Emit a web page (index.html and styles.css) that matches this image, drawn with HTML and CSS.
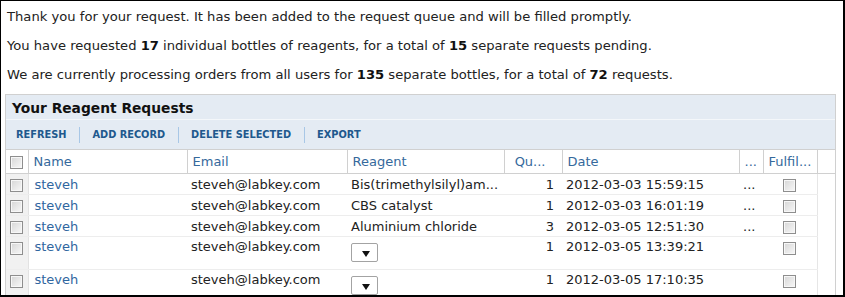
FILE: index.html
```html
<!DOCTYPE html>
<html lang="en">
<head>
    <meta charset="UTF-8">
    <title>Reagent Requests</title>
    <link rel="stylesheet" href="styles.css">
</head>
<body>
 <div class="frame">
  <p>Thank you for your request. It has been added to the request queue and will be filled promptly.</p>
  <p>You have requested <b>17</b> individual bottles of reagents, for a total of <b>15</b> separate requests pending.</p>
  <p>We are currently processing orders from all users for <b>135</b> separate bottles, for a total of <b>72</b> requests.</p>

  <div class="panel">
   <div class="panel-title">Your Reagent Requests</div>
   <div class="toolbar">
    <span class="tool">Refresh</span><span class="sep"></span>
    <span class="tool">Add Record</span><span class="sep"></span>
    <span class="tool">Delete Selected</span><span class="sep"></span>
    <span class="tool">Export</span>
   </div>
   <table class="grid">
    <colgroup>
     <col style="width:22px"><col style="width:159px"><col style="width:160px"><col style="width:157px">
     <col style="width:58px"><col style="width:177px"><col style="width:24px"><col style="width:54px"><col>
    </colgroup>
    <thead>
     <tr>
      <th class="cb-col"><span class="cb"></span></th>
      <th>Name</th>
      <th>Email</th>
      <th>Reagent</th>
      <th class="num">Qu...</th>
      <th>Date</th>
      <th>...</th>
      <th>Fulfil...</th>
      <th class="filler"></th>
     </tr>
    </thead>
    <tbody>
     <tr>
      <td class="cb-col"><span class="cb"></span></td>
      <td class="link">steveh</td>
      <td>steveh@labkey.com</td>
      <td>Bis(trimethylsilyl)am...</td>
      <td class="num">1</td>
      <td>2012-03-03 15:59:15</td>
      <td>...</td>
      <td class="center"><span class="cb"></span></td>
      <td class="filler"></td>
     </tr>
     <tr>
      <td class="cb-col"><span class="cb"></span></td>
      <td class="link">steveh</td>
      <td>steveh@labkey.com</td>
      <td>CBS catalyst</td>
      <td class="num">1</td>
      <td>2012-03-03 16:01:19</td>
      <td>...</td>
      <td class="center"><span class="cb"></span></td>
      <td class="filler"></td>
     </tr>
     <tr>
      <td class="cb-col"><span class="cb"></span></td>
      <td class="link">steveh</td>
      <td>steveh@labkey.com</td>
      <td>Aluminium chloride</td>
      <td class="num">3</td>
      <td>2012-03-05 12:51:30</td>
      <td>...</td>
      <td class="center"><span class="cb"></span></td>
      <td class="filler"></td>
     </tr>
     <tr class="tall">
      <td class="cb-col"><span class="cb"></span></td>
      <td class="link">steveh</td>
      <td>steveh@labkey.com</td>
      <td><span class="drop"></span></td>
      <td class="num">1</td>
      <td>2012-03-05 13:39:21</td>
      <td></td>
      <td class="center"><span class="cb"></span></td>
      <td class="filler"></td>
     </tr>
     <tr class="tall">
      <td class="cb-col"><span class="cb"></span></td>
      <td class="link">steveh</td>
      <td>steveh@labkey.com</td>
      <td><span class="drop"></span></td>
      <td class="num">1</td>
      <td>2012-03-05 17:10:35</td>
      <td></td>
      <td class="center"><span class="cb"></span></td>
      <td class="filler"></td>
     </tr>
    </tbody>
   </table>
  </div>
 </div>
</body>
</html>
```

FILE: styles.css
```css
        body {
            margin: 0;
            font-family: "DejaVu Sans", Verdana, sans-serif;
            font-size: 13px;
            color: #222;
            background-color: #fff;
        }
        .frame {
            box-sizing: border-box;
            width: 845px;
            height: 297px;
            overflow: hidden;
            border: 1px solid #000;
            border-right-width: 2px;
            border-bottom-width: 2px;
            padding: 7px 0 0 6px;
        }
        p {
            margin: 0 0 12px;
            line-height: 17px;
            font-size: 13.13px;
        }
        b { color: #111; }

        .panel {
            margin: -1px 0 0 -2px;
            width: 829px;
            border: 1px solid #d0d0d0;
            background-color: #e4ebf3;
        }
        .panel-title {
            height: 24px;
            line-height: 26px;
            padding-left: 6px;
            font-size: 13.8px;
            font-weight: bold;
            color: #111;
            border-bottom: 1px solid #f4f7fa;
        }
        .toolbar {
            height: 29px;
            display: flex;
            align-items: center;
            padding-left: 10px;
        }
        .tool {
            font-size: 9.8px;
            font-weight: bold;
            text-transform: uppercase;
            color: #20588d;
        }
        .sep {
            width: 1px;
            height: 16px;
            background-color: #a8c7e6;
            margin: 0 12px 0 13px;
        }

        .grid {
            width: 829px;
            table-layout: fixed;
            border-collapse: collapse;
            background-color: #fff;
        }
        .grid th {
            height: 23px;
            padding: 0 0 0 5px;
            font-weight: normal;
            text-align: left;
            color: #35699c;
            border-top: 1px solid #d0d0d0;
            border-bottom: 1px solid #d0d0d0;
            border-right: 1px solid #d0d0d0;
            white-space: nowrap;
            overflow: hidden;
        }
        .grid td {
            height: 20px;
            padding: 0 0 0 4px;
            border-bottom: 1px solid #ededed;
            white-space: nowrap;
            overflow: hidden;
            vertical-align: middle;
        }
        .grid tr.tall td {
            height: 29px;
            vertical-align: top;
            padding-top: 2px;
        }
        .grid .cb-col {
            padding: 0 0 0 4px;
            background-color: #f1f1f1;
            border-right: 1px solid #e2e2e2;
        }
        .grid th.cb-col { background-color: #fff; border-right-color: #d0d0d0; }
        .grid tr.tall td.cb-col { padding-top: 3px; }
        .grid .num {
            text-align: right;
            padding-right: 8px;
        }
        .grid th.num { padding-right: 16px; }
        .grid .link { color: #2f66a0; padding-left: 6px; }
        .grid .center { text-align: center; padding-left: 0; }
        .grid tr.tall td.center { padding-top: 3px; }
        .grid .filler {
            border-left: 1px solid #e6e6e6;
            border-right: none;
            border-bottom: none;
        }
        .grid th.filler { border-left-color: #d0d0d0; border-bottom: 1px solid #d0d0d0; }

        .cb {
            display: inline-block;
            vertical-align: middle;
            box-sizing: border-box;
            width: 13px;
            height: 13px;
            border: 1px solid #8e8e8e;
            box-shadow: inset 0 0 0 1px #f7f7f7;
            background: linear-gradient(135deg, #d6d6d6, #f8f8f8);
        }
        .drop {
            display: inline-block;
            box-sizing: border-box;
            width: 27px;
            height: 19px;
            margin-top: 4px;
            border: 1px solid #a3a3a3;
            border-radius: 2px;
            background-color: #fff;
            position: relative;
        }
        .drop::after {
            content: "";
            position: absolute;
            left: 10px;
            top: 7px;
            border-left: 4px solid transparent;
            border-right: 4px solid transparent;
            border-top: 6px solid #111;
        }
```
